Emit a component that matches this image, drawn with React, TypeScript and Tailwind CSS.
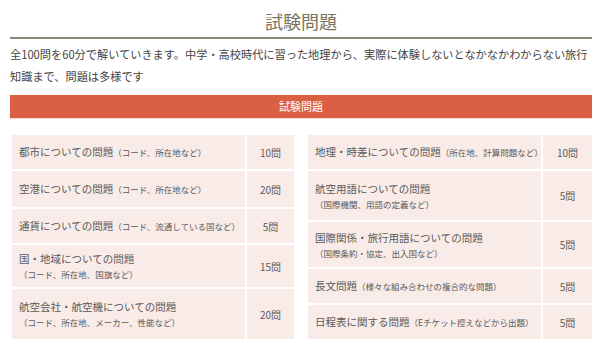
import React from 'react';

type Row = { title: string; note?: string; inline?: boolean; count: string; h: string };

const leftRows: Row[] = [
  { title: '都市についての問題', note: '（コード、所在地など）', inline: true, count: '10問', h: 'h-[34px]' },
  { title: '空港についての問題', note: '（コード、所在地など）', inline: true, count: '20問', h: 'h-[36px]' },
  { title: '通貨についての問題', note: '（コード、流通している国など）', inline: true, count: '5問', h: 'h-[34px]' },
  { title: '国・地域についての問題', note: '（コード、所在地、国旗など）', count: '15問', h: 'h-[42px]' },
  { title: '航空会社・航空機についての問題', note: '（コード、所在地、メーカー、性能など）', count: '20問', h: 'h-[50px]' },
];

const rightRows: Row[] = [
  { title: '地理・時差についての問題', note: '（所在地、計算問題など）', inline: true, count: '10問', h: 'h-[34px]' },
  { title: '航空用語についての問題', note: '（国際機関、用語の定義など）', count: '5問', h: 'h-[49px]' },
  { title: '国際関係・旅行用語についての問題', note: '（国際条約・協定、出入国など）', count: '5問', h: 'h-[45px]' },
  { title: '長文問題', note: '（様々な組み合わせの複合的な問題）', inline: true, count: '5問', h: 'h-[34px]' },
  { title: '日程表に関する問題', note: '（Eチケット控えなどから出題）', inline: true, count: '5問', h: 'h-[34px]' },
];

function ExamTable({ rows, countCol }: { rows: Row[]; countCol: string }) {
  return (
    <div className="flex flex-col gap-[2px]">
      {rows.map((r) => (
        <div key={r.title} className={`grid ${countCol} gap-[2px] ${r.h}`}>
          <div className="bg-[#f9ebe7] flex flex-col justify-center pl-[7px] min-w-0">
            {r.inline ? (
              <div className="text-[10.5px] leading-[14px] whitespace-nowrap">
                {r.title}
                <span className="text-[8.5px]">{r.note}</span>
              </div>
            ) : (
              <>
                <div className="text-[10.5px] leading-[16px]">{r.title}</div>
                <div className="text-[8.5px] leading-[14px]">{r.note}</div>
              </>
            )}
          </div>
          <div className="bg-[#f9ebe7] flex items-center justify-center text-[10px]">{r.count}</div>
        </div>
      ))}
    </div>
  );
}

export default function App() {
  return (
    <div className="w-[600px] h-[349px] overflow-hidden bg-white text-[#5a5a5a] font-['Noto_Sans_CJK_JP',sans-serif]">
      <div className="pl-[10px] pr-[8px]">
        <h2 className="pt-[11px] pb-[5px] text-center text-[18px] leading-[21px] text-[#7a745e] border-b-2 border-[#8b8a7b]">
          試験問題
        </h2>
        <p className="mt-[4px] text-[11.2px] leading-[22px] text-[#444]">
          全100問を60分で解いていきます。中学・高校時代に習った地理から、実際に体験しないとなかなかわからない旅行
          <br />
          知識まで、問題は多様です
        </p>
        <div className="mt-[8px] h-[24px] bg-[#da5f43] border-b border-[#f6d8cf] flex items-center justify-center text-white text-[11px]">
          試験問題
        </div>
        <div className="mt-[16px] pl-[2px] grid grid-cols-[282px_284px] gap-[14px]">
          <ExamTable rows={leftRows} countCol="grid-cols-[minmax(0,1fr)_47px]" />
          <ExamTable rows={rightRows} countCol="grid-cols-[minmax(0,1fr)_49px]" />
        </div>
      </div>
    </div>
  );
}
